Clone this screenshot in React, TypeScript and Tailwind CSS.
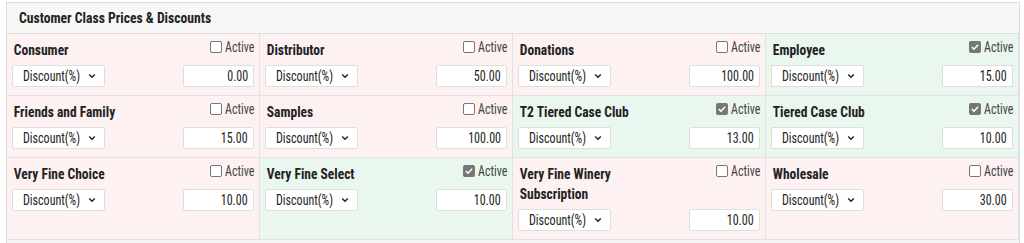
import React from "react";

interface PriceClass {
  name: string;
  active: boolean;
  value: string;
}

const CLASSES: PriceClass[] = [
  { name: "Consumer", active: false, value: "0.00" },
  { name: "Distributor", active: false, value: "50.00" },
  { name: "Donations", active: false, value: "100.00" },
  { name: "Employee", active: true, value: "15.00" },
  { name: "Friends and Family", active: false, value: "15.00" },
  { name: "Samples", active: false, value: "100.00" },
  { name: "T2 Tiered Case Club", active: true, value: "13.00" },
  { name: "Tiered Case Club", active: true, value: "10.00" },
  { name: "Very Fine Choice", active: false, value: "10.00" },
  { name: "Very Fine Select", active: true, value: "10.00" },
  { name: "Very Fine Winery Subscription", active: false, value: "10.00" },
  { name: "Wholesale", active: false, value: "30.00" },
];

// no condensed face installed, so Roboto is squeezed horizontally
const FONT = "font-['Roboto_Condensed',Roboto,sans-serif]";

function Check({ checked }: { checked: boolean }) {
  if (checked) {
    return (
      <span className="flex h-[12px] w-[12px] items-center justify-center rounded-[2px] bg-[#777]">
        <svg viewBox="0 0 12 12" className="h-[10px] w-[10px]">
          <path d="M2.2 6.2 L4.8 8.6 L9.8 3.2" fill="none" stroke="#fff" strokeWidth="1.8" />
        </svg>
      </span>
    );
  }
  return <span className="h-[12px] w-[12px] rounded-[2px] border border-[#767676] bg-white" />;
}

function ClassCell({ item }: { item: PriceClass }) {
  return (
    <div
      className={`flex flex-col border-b border-r border-[#e2e2e2] px-[5px] pb-[8px] pt-[4px] ${
        item.active ? "bg-[#e9f7ef]" : "bg-[#fdf1f1]"
      }`}
    >
      <div className="flex items-start justify-between gap-2">
        <span className="block w-[138px] origin-left scale-x-[0.9] pl-[2px] pt-[2px] text-[15px] font-bold leading-[20px] text-[#222]">
          {item.name}
        </span>
        <label className="flex items-center gap-[3px] text-[15px] leading-[18px] text-[#444]">
          <Check checked={item.active} />
          <span className="-mr-[8px] inline-block origin-left scale-x-[0.8]">Active</span>
        </label>
      </div>
      <div className="mt-[5px] flex items-center justify-between">
        <div className="flex h-[22px] w-[93px] items-center rounded-[2px] border border-[#dedede] bg-white pl-[10px] text-[15px] text-[#222]">
          <span className="-mr-[15px] inline-block origin-left scale-x-[0.8]">Discount(%)</span>
          <svg viewBox="0 0 10 10" className="ml-[9px] h-[8px] w-[8px]">
            <path d="M1.5 3.2 L5 6.6 L8.5 3.2" fill="none" stroke="#222" strokeWidth="1.8" />
          </svg>
        </div>
        <div className="flex h-[22px] w-[71px] items-center justify-end rounded-[2px] border border-[#dedede] bg-white pr-[5px] text-[15px] text-[#222]">
          <span className="inline-block origin-right scale-x-[0.8]">{item.value}</span>
        </div>
      </div>
    </div>
  );
}

export default function App() {
  return (
    <div className={`h-[243px] w-[1024px] overflow-hidden bg-white pl-[6px] pr-[4px] pt-[2px] ${FONT}`}>
      <div className="border-l border-r border-t border-[#dcdcdc]">
        <div className="flex h-[31px] items-center border-b border-[#dcdcdc] bg-[#f7f7f7] px-[12px] text-[15px] font-bold text-[#222]">
          <span className="inline-block origin-left scale-x-[0.91]">Customer Class Prices &amp; Discounts</span>
        </div>
        <div className="grid grid-cols-4">
          {CLASSES.map((item) => (
            <ClassCell key={item.name} item={item} />
          ))}
        </div>
        <div className="h-[10px] bg-[#f5f5f5]" />
      </div>
    </div>
  );
}
